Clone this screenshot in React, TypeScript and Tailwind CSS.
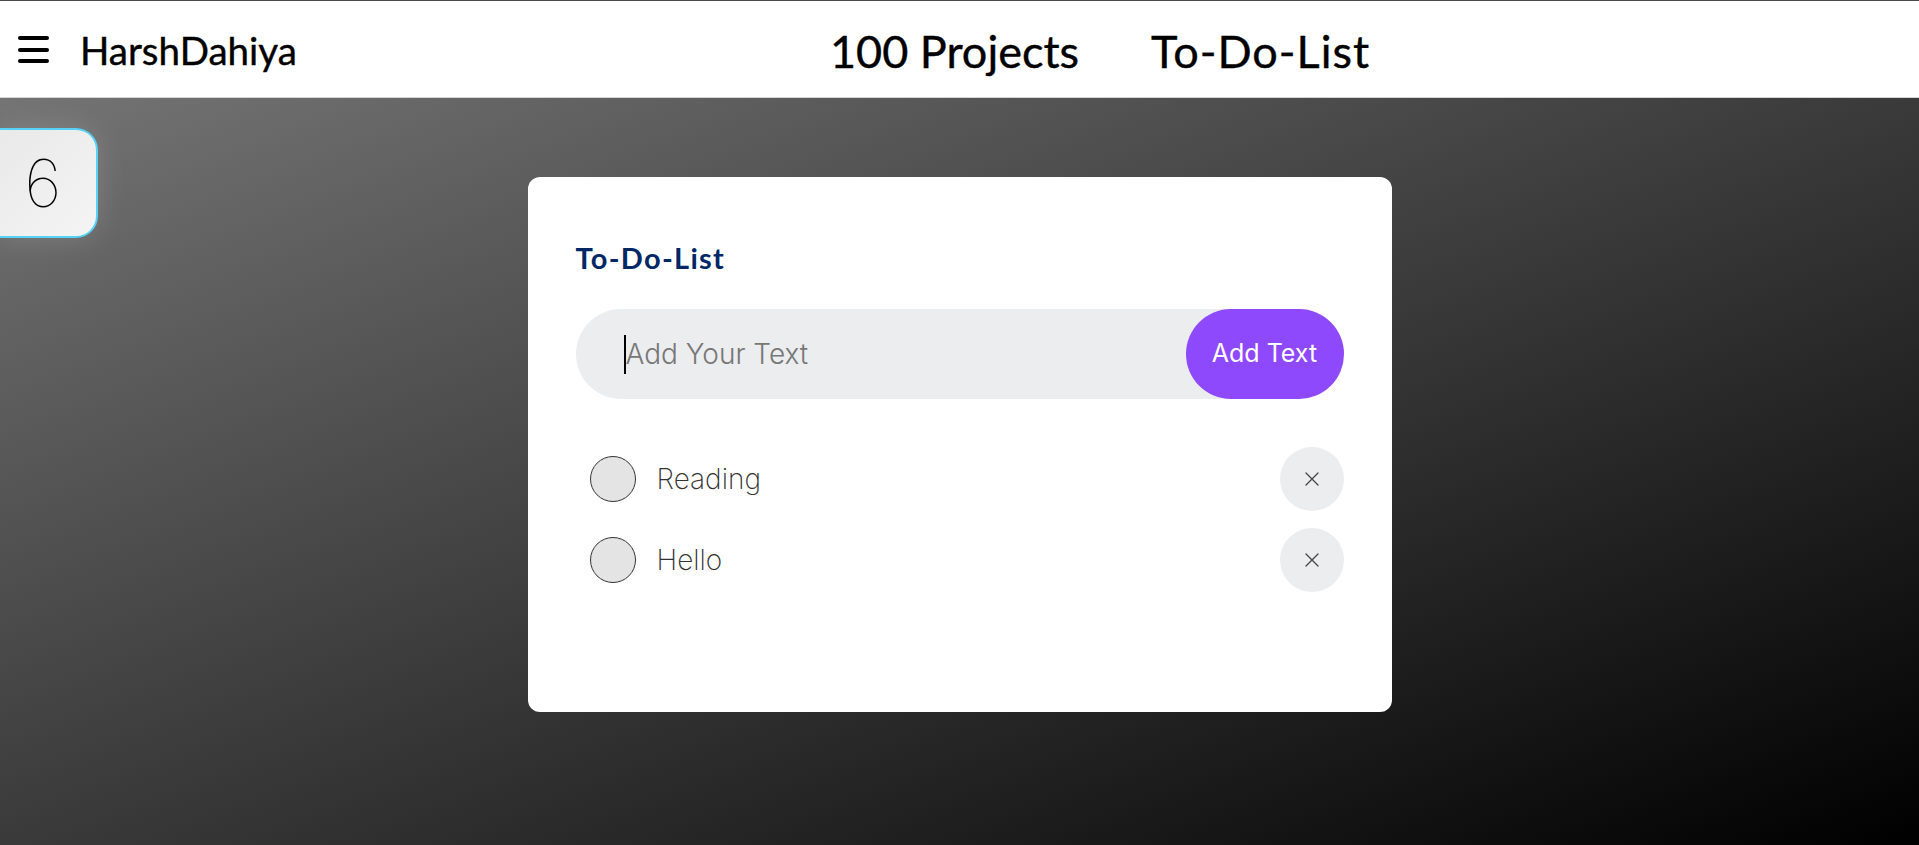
import React from 'react'

const todos = ['Reading', 'Hello']

function Hamburger() {
  return (
    <svg width="31" height="28" viewBox="0 0 31 28" className="shrink-0">
      <rect x="0" y="0" width="31" height="4" rx="2" fill="#000" />
      <rect x="0" y="12" width="31" height="4" rx="2" fill="#000" />
      <rect x="0" y="23" width="31" height="4" rx="2" fill="#000" />
    </svg>
  )
}

function CloseIcon() {
  return (
    <svg width="14" height="14" viewBox="0 0 14 14">
      <path d="M1 1 L13 13 M13 1 L1 13" stroke="#444" strokeWidth="1.3" strokeLinecap="round" />
    </svg>
  )
}

export default function App() {
  return (
    <div className="min-h-screen flex flex-col font-['Lato',sans-serif]">
      {/* Header */}
      <header className="h-[98px] bg-white border-t border-[#4a4a4a] border-b border-b-[#d4d4d4] flex items-center">
        <div className="w-[830px] shrink-0 flex items-center pl-[18px] pt-[2px]">
          <Hamburger />
          <span className="ml-[31px] text-[38.5px] leading-none text-black [-webkit-text-stroke:0.4px_#000]">HarshDahiya</span>
        </div>
        <nav className="flex items-center gap-[72px] text-[45px] leading-none text-black pt-[4px] [-webkit-text-stroke:0.4px_#000]">
          <span>100 Projects</span>
          <span className="tracking-[1px]">To-Do-List</span>
        </nav>
      </header>

      {/* Main */}
      <main className="relative flex-1 min-h-[747px] bg-[linear-gradient(to_bottom_right,#747474,#000)] pt-[79px]">
        <div className="absolute left-0 top-[30px] w-[98px] h-[110px] bg-[linear-gradient(135deg,#e9e9e9,#f4f4f4)] border-[2.5px] border-l-0 border-[#55d2f6] rounded-r-[22px] flex items-center justify-center pr-[10px] shadow-[0_0_30px_rgba(255,255,255,0.15)]">
          <span className="font-['Inter',sans-serif] font-thin text-[66px] leading-none text-black">6</span>
        </div>

        <section className="mx-auto w-[864px] h-[535px] bg-white rounded-[12px] px-12 pt-[63px]">
          <h2 className="text-[29px] leading-[36px] font-bold tracking-[1.3px] text-[#002765]">To-Do-List</h2>

          <div className="mt-[33px] h-[90px] rounded-full bg-[#ecedef] flex items-center">
            <span className="ml-[48px] w-[2px] h-[39px] bg-black shrink-0" />
            <input
              className="flex-1 min-w-0 bg-transparent outline-none font-['Inter',sans-serif] font-light text-[28px] text-[#333] placeholder:text-[#777]"
              placeholder="Add Your Text"
            />
            <button className="w-[158px] h-full rounded-full bg-[#8f49fd] text-white font-['Inter',sans-serif] text-[25px] shrink-0">
              Add Text
            </button>
          </div>

          <ul className="mt-[48px] flex flex-col gap-[17px]">
            {todos.map((t) => (
              <li key={t} className="h-[64px] flex items-center">
                <span className="ml-[14px] w-[46px] h-[46px] rounded-full bg-[#e4e4e4] border border-[#333] shrink-0" />
                <span className="ml-[21px] flex-1 font-['Inter',sans-serif] font-extralight text-[28px] text-[#333]">{t}</span>
                <button className="w-[64px] h-[64px] rounded-full bg-[#ecedef] flex items-center justify-center shrink-0">
                  <CloseIcon />
                </button>
              </li>
            ))}
          </ul>
        </section>
      </main>
    </div>
  )
}
